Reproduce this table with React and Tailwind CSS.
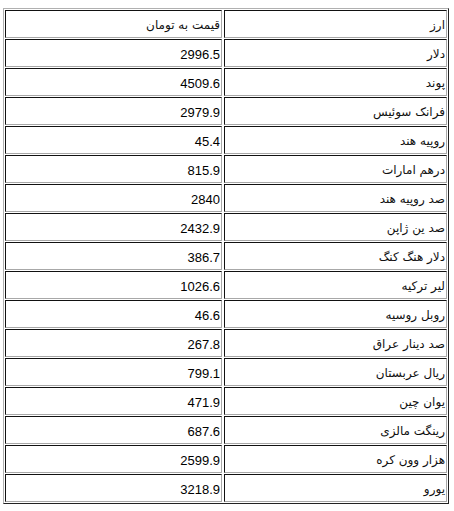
import React from "react";

const rows = [
  ["ارز", "قیمت به تومان"],
  ["دلار", "2996.5"],
  ["پوند", "4509.6"],
  ["فرانک سوئیس", "2979.9"],
  ["روپیه هند", "45.4"],
  ["درهم امارات", "815.9"],
  ["صد روپیه هند", "2840"],
  ["صد ین ژاپن", "2432.9"],
  ["دلار هنگ کنگ", "386.7"],
  ["لیر ترکیه", "1026.6"],
  ["روبل روسیه", "46.6"],
  ["صد دینار عراق", "267.8"],
  ["ریال عربستان", "799.1"],
  ["یوان چین", "471.9"],
  ["رینگت مالزی", "687.6"],
  ["هزار وون کره", "2599.9"],
  ["یورو", "3218.9"],
];

function Cell({ children }) {
  const fa = /[\u0600-\u06FF]/.test(children);
  return (
    <div className="h-[28px] border-t border-l border-t-[#111] border-l-[#111] border-b border-r border-b-[#a8a8a8] border-r-[#a8a8a8] flex items-center pr-[1px] pt-[2px] text-right leading-none text-black">
      {fa ? (
        <span className="text-[12px] text-[#111] [font-family:'DejaVu_Sans',sans-serif]">{children}</span>
      ) : (
        <span className="text-[13px] [font-family:'Liberation_Sans',sans-serif]">{children}</span>
      )}
    </div>
  );
}

export default function App() {
  return (
    <div className="bg-white w-[454px] h-[511px] pt-[8px] pl-[3px]">
      <div
        dir="rtl"
        className="w-[446px] border-t border-l border-t-[#b0b0b0] border-l-[#b0b0b0] border-b border-r border-b-[#222] border-r-[#222] p-[1px] grid grid-cols-[223px_217px] gap-x-[2px] gap-y-[1px]"
      >
        {rows.map(([a, b], i) => (
          <React.Fragment key={i}>
            <Cell>{a}</Cell>
            <Cell>{b}</Cell>
          </React.Fragment>
        ))}
      </div>
    </div>
  );
}
